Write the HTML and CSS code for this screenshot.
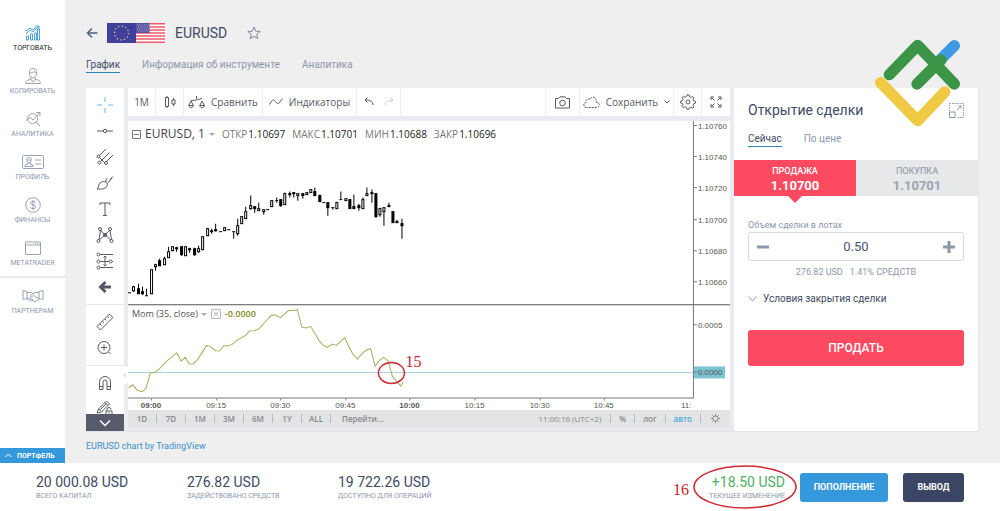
FILE: index.html
```html
<!DOCTYPE html>
<html lang="ru">
<head>
  <meta charset="UTF-8">
  <title>EURUSD — торговля</title>
  <link rel="stylesheet" href="styles.css">
</head>
<body>
  <nav class="sidebar">
    <a href="#" class="nav-item active">
      <svg width="16" height="16" viewBox="0 0 16 16"><path d="M1.500 15v-4h2v4zM5.500 15V9h2v6zM9.500 15V8h2v7zM12.500 15V4h2v11zM1 9l4-4 3 2 6-6M10.500 1H14v3M1 6l4-3 3 2 3-3"/></svg>
      <span>ТОРГОВАТЬ</span>
    </a>
    <a href="#" class="nav-item">
      <svg width="16" height="16" viewBox="0 0 16 16"><path d="M4.500 5.500C4 2 5.500.5 8 .5s4 1.500 3.500 5c0 3-1.700 4.500-3.500 4.500S4.500 8.500 4.500 5.500zM4.500 5c2 0 4-.5 5-1.500.5 1 1.200 1.500 2 1.500M6 9.500v2L8 14l2-2.500v-2M6 11l-4 1.500c-1 .5-1.300 1.500-1.300 3h14.600c0-1.500-.3-2.500-1.300-3L10 11"/></svg>
      <span>КОПИРОВАТЬ</span>
    </a>
    <a href="#" class="nav-item">
      <svg width="16" height="16" viewBox="0 0 16 16"><circle cx="7.500" cy="7.500" r="5"/><path d="M11 11l4 4M.5 10l4.500-3.500 3 2.500 6.500-7M11 1.500h4V5"/></svg>
      <span>АНАЛИТИКА</span>
    </a>
    <a href="#" class="nav-item">
      <svg width="22" height="16" viewBox="0 0 22 16"><rect x=".5" y="1.500" width="21" height="13" rx="1"/><path d="M13 6h6M13 10h6M4.800 5.500C4.800 4 5.700 3.500 7 3.500s2.200.5 2.200 2S8.500 8.500 7 8.500s-2.200-1.500-2.200-3zM5 6h4M6 8.500V10l-3 1v1.500h8V11l-3-1V8.500"/></svg>
      <span>ПРОФИЛЬ</span>
    </a>
    <a href="#" class="nav-item">
      <svg width="16" height="16" viewBox="0 0 16 16"><circle cx="8" cy="8" r="7.300"/><path d="M10.500 5.500C10 4.700 9.200 4.400 8 4.400c-1.500 0-2.500.6-2.500 1.700C5.500 8.500 10.600 7 10.600 9.800c0 1.200-1.100 1.800-2.600 1.800-1.200 0-2.200-.4-2.700-1.300M8 3v10"/></svg>
      <span>ФИНАНСЫ</span>
    </a>
    <a href="#" class="nav-item">
      <svg width="16" height="16" viewBox="0 0 16 16"><path d="M.5 2h15v12.500H.5zM.5 5h15M10 3.500h1M12.500 3.500h1"/></svg>
      <span>METATRADER</span>
    </a>
    <hr>
    <a href="#" class="nav-item">
      <svg width="22" height="16" viewBox="0 0 22 16"><path d="M1 2.500l4 1v7l-4 1zM21 2.500l-4 1v7l4 1zM5 4.500h4l2 1 2-1h4M11 5.500L8 8c1 1 2 1 3.500-.5L17 11M5 10l1.500.5M6 11.500l2-2 1 1-2 2zM8.500 12.500l1.500-1.500 1 1-1.500 1.500zM11 13l1.500.8L14 13l1.500-.5L17 11"/></svg>
      <span>ПАРТНЕРАМ</span>
    </a>
    <button class="portfolio">
      <svg width="7" height="5" viewBox="0 0 7 5"><path d="M.5 4l3-3 3 3"/></svg>
      ПОРТФЕЛЬ
    </button>
  </nav>

  <main>
    <header class="instrument">
      <button class="icon-btn back" aria-label="Назад">
        <svg width="12" height="12" viewBox="0 0 12 12"><path d="M11.500 6H1.500M6 1.500L1.500 6 6 10.500"/></svg>
      </button>
      <svg class="flags" width="58" height="20" viewBox="0 0 58 20">
        <path fill="#403f9b" stroke="none" d="M0 0h29v20H0z"/>
        <circle cx="14.500" cy="10" r="7" fill="none" stroke="#d9cf7c" stroke-width="1.400" stroke-dasharray="1.200 2.465"/>
        <path fill="#fff" stroke="none" d="M29 0h29v20H29z"/>
        <path stroke="#ee5a68" stroke-width="1.500" d="M29 .8h29M29 3.900h29M29 7h29M29 10h29M29 13.100h29M29 16.100h29M29 19.200h29"/>
        <path fill="#55529f" stroke="none" d="M29 0h13.500v10H29z"/>
        <path stroke="#b9b6dd" stroke-dasharray="1 1.300" d="M30 2h12M31 4h11M30 6h12M31 8h11"/>
      </svg>
      <h1>EURUSD</h1>
      <button class="icon-btn star" aria-label="В избранное">
        <svg width="14" height="14" viewBox="0 0 14 14"><path d="M7 1l1.700 4.200 4.500.3-3.500 2.900 1.200 4.400L7 10.300l-3.900 2.500 1.200-4.400L.8 5.500l4.500-.3z"/></svg>
      </button>
    </header>

    <div class="tabs">
      <a href="#" class="active">График</a>
      <a href="#">Информация об инструменте</a>
      <a href="#">Аналитика</a>
    </div>

    <div class="workspace">
      <section class="chart-widget">
        <div class="draw-tools">
          <button aria-label="Перекрестие"><svg class="cross" width="18" height="18" viewBox="0 0 18 18"><path d="M9 1v5M9 12v5M1 9h5M12 9h5"/></svg></button>
          <button aria-label="Линия"><svg width="18" height="18" viewBox="0 0 18 18"><path d="M1 9h6M11 9h6"/><circle cx="9" cy="9" r="1.700"/></svg></button>
          <button aria-label="Вилы"><svg width="18" height="18" viewBox="0 0 18 18"><path d="M3 8l7-7M4.500 13.500l9-9M10 14l7-7M3 9l6 6"/><circle cx="2.500" cy="8.500" r="1.500"/><circle cx="3.500" cy="14.500" r="1.500"/><circle cx="10" cy="15" r="1.500"/></svg></button>
          <button aria-label="Кисть"><svg width="18" height="18" viewBox="0 0 18 18"><path d="M1 15c2-1 1-4 3-6 2-2 5-2 7 0 1 2 0 4-2 5-2 1.500-5 1-8 1zM10 8V5.500L11.500 4M12 9l4-5M14 5.500l3-3"/></svg></button>
          <button aria-label="Текст"><svg width="18" height="18" viewBox="0 0 18 18"><path d="M4 5V3h10v2M9 3v12M7 15.500h4"/></svg></button>
          <button aria-label="Фигуры"><svg width="18" height="18" viewBox="0 0 18 18"><path d="M3 14L4.500 4 9 9l5-5 1.500 10M3 14l6-5 6 5"/><circle cx="4" cy="3" r="1.500"/><circle cx="14" cy="3" r="1.500"/><circle cx="2.500" cy="15" r="1.500"/><circle cx="15.500" cy="15" r="1.500"/><circle cx="9" cy="9" r="1.500"/></svg></button>
          <button aria-label="Прогноз"><svg width="18" height="18" viewBox="0 0 18 18"><path d="M4 2.500h13M4 9.500h9M16 9.500h1M4 15.500h13M9 4v10M7.500 5.500L9 4l1.500 1.500M7.500 12.500L9 14l1.500-1.500"/><circle cx="2.500" cy="2.500" r="1.500"/><circle cx="2.500" cy="9.500" r="1.500"/><circle cx="14.500" cy="9.500" r="1.500"/><circle cx="2.500" cy="15.500" r="1.500"/></svg></button>
          <button aria-label="Скрыть"><svg class="bold" width="18" height="18" viewBox="0 0 18 18"><path d="M15 9H5M9.500 4L4.500 9l5 5"/></svg></button>
          <hr>
          <button aria-label="Линейка"><svg width="18" height="18" viewBox="0 0 18 18"><path d="M1 13.500L13.500 1 17 4.500 4.500 17zM4 11l1.500 1.500M6.500 8.500L8 10M9 6l1.500 1.500M11.500 3.500L13 5"/></svg></button>
          <button aria-label="Увеличить"><svg width="18" height="18" viewBox="0 0 18 18"><circle cx="8" cy="8.500" r="6"/><path d="M12.500 13l2 2M8 5.500v6M5 8.500h6"/></svg></button>
          <hr>
          <button aria-label="Магнит"><svg width="18" height="18" viewBox="0 0 18 18"><path d="M3.500 15.500V8a5.500 5.500 0 0 1 11 0v7.500h-3.500V8a2 2 0 0 0-4 0v7.500zM3.500 12.500H7M11 12.500h3.500"/></svg></button>
          <button aria-label="Блокировка"><svg width="18" height="18" viewBox="0 0 18 18"><path d="M1 13l1.500-4L10.500 1l3 3-8 8zM9 2.500l3 3M3 9l2.500 3M4.500 9.500l6-6M10 11h6v5h-6zM11 11V9.500a2 2 0 0 1 4 0M13 12.500v2"/></svg></button>
          <button class="more" aria-label="Ещё"><svg width="12" height="8" viewBox="0 0 12 8"><path d="M1 1.500l5 5 5-5"/></svg></button>
          <button class="handle" aria-label="Свернуть">‹</button>
        </div>

        <div class="chart-area">
          <div class="toolbar">
            <button class="w-s">1М</button>
            <button class="w-s" aria-label="Свечи"><svg width="12" height="14" viewBox="0 0 12 14"><path d="M1.500 2.500h3v9h-3zM3 1v1.500M3 11.500V13M8 5h3v4H8zM9.500 3v2M9.500 9v2"/></svg></button>
            <button class="w-l"><svg width="17" height="14" viewBox="0 0 17 14"><path d="M3 5.500c4 0 9-1 11-2.500M8.500 1v3M3 6L.8 10.500h4.600L3 6M.8 10.500c.4 3 4.200 3 4.600 0M14 6l-2.200 4.500h4.600L14 6M11.800 10.500c.4 3 4.200 3 4.600 0"/></svg>Сравнить</button>
            <button class="w-xl"><svg width="14" height="8" viewBox="0 0 14 8"><path d="M.5 6.500C3 2 4 1 5.500 2.500S8 6.500 10 5s2-3 3.500-4.500"/></svg>Индикаторы</button>
            <div class="history">
              <button aria-label="Отменить"><svg width="10" height="9" viewBox="0 0 10 9"><path d="M9 8c0-3-2-5-8-5M3.500.5L1 3l2.500 2.500"/></svg></button>
              <button class="off" aria-label="Повторить" disabled><svg width="10" height="9" viewBox="0 0 10 9"><path d="M1 8c0-3 2-5 8-5M6.500.5L9 3 6.500 5.500"/></svg></button>
            </div>
            <div class="spacer"></div>
            <button class="w-m" aria-label="Снимок"><svg width="15" height="13" viewBox="0 0 15 13"><path d="M.5 2.500h3L5 .8h5l1.500 1.700h3v9.500H.5z"/><circle cx="7.500" cy="7" r="2.800"/></svg></button>
            <button class="w-xl"><svg width="17" height="12" viewBox="0 0 17 12"><path stroke-dasharray="2 1" d="M3.500 11.500C0 11 0 7 3 6.500 2.500 3 6 2 7 3.500 9-.5 14 1 13 6c4 0 4.500 5 .5 5.500z"/></svg>Сохранить<svg width="6" height="4" viewBox="0 0 6 4"><path d="M.5.5L3 3 5.500.5"/></svg></button>
            <button class="w-s" aria-label="Настройки"><svg width="16" height="16" viewBox="0 0 16 16"><circle cx="8" cy="8" r="2"/><path d="M7 .8h2l.4 2 1.500.7 1.800-1.100 1.300 1.400-1 1.700.7 1.500 1.700.3v1.900l-1.800.5-.6 1.500 1 1.700-1.300 1.300-1.800-1-1.500.6L9 15.200H7l-.5-1.800-1.400-.7-1.700 1.100-1.300-1.400 1-1.700-.6-1.500L.6 9V7.100l1.900-.4.6-1.400-1-1.700 1.300-1.400 1.700 1.100 1.500-.7z"/></svg></button>
            <button class="w-s" aria-label="На весь экран"><svg width="12" height="12" viewBox="0 0 12 12"><path d="M1 4V1h3M1 1l3.500 3.500M8 1h3v3M11 1L7.500 4.500M1 8v3h3M1 11l3.500-3.500M11 8v3H8M11 11L7.500 7.500"/></svg></button>
          </div>

          <div class="plot">
            <div class="legend">
              <svg width="9" height="9" viewBox="0 0 9 9"><path d="M.5.5h8v8h-8zM2 4.500h5"/></svg>
              <b>EURUSD, 1</b>
              <i class="caret"></i>
              <span>ОТКР<em>1.10697</em></span>
              <span>МАКС<em>1.10701</em></span>
              <span>МИН<em>1.10688</em></span>
              <span>ЗАКР<em>1.10696</em></span>
            </div>
            <div class="legend study">
              <span>Mom (35, close)</span>
              <i class="caret"></i>
              <svg width="10" height="10" viewBox="0 0 10 10"><path d="M.5.5h9v9h-9zM2.500 2.500l5 5M7.500 2.500l-5 5"/></svg>
              <strong>-0.0000</strong>
            </div>
            <svg id="chart" viewBox="0 0 601 289">
              <path class="sep" d="M0 183.500h601"/>
              <path class="zero" d="M0 251h564"/>
              <g id="candles"></g>
              <polyline id="momentum"/>
              <path class="axis" d="M564.500 0v276.500M0 276.500h565"/>
              <rect class="tag" x="565" y="245" width="31" height="12"/>
              <g id="prices"></g>
              <g id="times"></g>
              <ellipse class="mark" cx="263" cy="251.500" rx="13" ry="10.500"/>
              <text class="mark-text" x="277" y="246">15</text>
            </svg>
          </div>

          <div class="ranges">
            <button>1D</button><button>7D</button><button>1M</button><button>3M</button><button>6M</button><button>1Y</button><button>ALL</button>
            <button class="goto">Перейти...</button>
            <span class="clock">11:00:16 (UTC+2)</span>
            <button class="mode">%</button><button class="mode">лог</button><button class="mode on">авто</button>
            <button class="mode" aria-label="Параметры"><svg width="9" height="9" viewBox="0 0 9 9"><circle cx="4.500" cy="4.500" r="2.600"/><path d="M4.500 0v2M4.500 7v2M0 4.500h2M7 4.500h2M1.300 1.300l1.200 1.200M6.500 6.500l1.200 1.200M1.300 7.700l1.200-1.200M6.500 2.500l1.200-1.200"/></svg></button>
          </div>
        </div>
      </section>

      <section class="deal">
        <div class="deal-head">
          <h2>Открытие сделки</h2>
          <button class="icon-btn" aria-label="Открепить">
            <svg width="15" height="15" viewBox="0 0 15 15"><path stroke-dasharray="1.500 1" d="M.5 8V.5h14v14H8"/><path d="M.5 9h5.500v5.500H.5zM8 7l4-4M9.500 3H12v2.500"/></svg>
          </button>
        </div>
        <div class="tabs small">
          <a href="#" class="active">Сейчас</a>
          <a href="#">По цене</a>
        </div>
        <div class="sides">
          <button class="side sell">ПРОДАЖА<b>1.10700</b></button>
          <button class="side">ПОКУПКА<b>1.10701</b></button>
        </div>
        <form class="order">
          <label for="lots">Объем сделки в лотах</label>
          <div class="stepper">
            <button type="button" aria-label="Меньше"><svg width="12" height="12" viewBox="0 0 12 12"><path d="M0 6h12"/></svg></button>
            <input id="lots" type="text" value="0.50">
            <button type="button" aria-label="Больше"><svg width="12" height="12" viewBox="0 0 12 12"><path d="M0 6h12M6 0v12"/></svg></button>
          </div>
          <p class="cost"><span>276.82 USD</span><span>1.41% СРЕДСТВ</span></p>
          <button type="button" class="terms"><svg width="9" height="6" viewBox="0 0 9 6"><path d="M.5.5l4 4.500 4-4.500"/></svg>Условия закрытия сделки</button>
          <button type="button" class="submit">ПРОДАТЬ</button>
        </form>
      </section>
    </div>
    <a href="#" class="credit">EURUSD chart by TradingView</a>
  </main>

  <footer>
    <div class="stat"><b>20 000.08 USD</b><span>ВСЕГО КАПИТАЛ</span></div>
    <div class="stat"><b>276.82 USD</b><span>ЗАДЕЙСТВОВАНО СРЕДСТВ</span></div>
    <div class="stat"><b>19 722.26 USD</b><span>ДОСТУПНО ДЛЯ ОПЕРАЦИЙ</span></div>
    <div class="stat change">
      <b>+18.50 USD</b><span>ТЕКУЩЕЕ ИЗМЕНЕНИЕ</span>
      <svg class="ring" width="126" height="44" viewBox="0 0 126 44">
        <ellipse class="mark" cx="74" cy="22" rx="51" ry="21"/>
        <text class="mark-text" x="2" y="30">16</text>
      </svg>
    </div>
    <button class="deposit">ПОПОЛНЕНИЕ</button>
    <button class="withdraw">ВЫВОД</button>
  </footer>

  <svg class="brand" width="120" height="100" viewBox="0 0 360 300">
    <path stroke="#3f9be0" d="M225 105l58-58"/>
    <path stroke="#3c9446" d="M88 134l85-88 110 116M171 162l72-72"/>
    <path stroke="#f0ca45" d="M62 158l111 114 81-86"/>
  </svg>

  <script src="chart.js"></script>
</body>
</html>
```
FILE: styles.css
```css
* { box-sizing: border-box; margin: 0; padding: 0; }
body {
  display: grid;
  grid-template-columns: 65px 1fr;
  grid-template-rows: 1fr 48px;
  min-height: 100vh;
  position: relative;
  background: #efefef;
  color: #3f4b66;
  font-family: Roboto, sans-serif;
  font-size: 10px;
}
button { font: inherit; color: inherit; background: none; border: none; cursor: pointer; }
a { color: inherit; text-decoration: none; }
svg { flex: none; fill: none; stroke: currentColor; }

/* sidebar */
.sidebar {
  display: flex;
  flex-direction: column;
  padding-top: 25px;
  background: #fff;
  color: #8d97aa;
}
.nav-item {
  display: flex;
  flex-direction: column;
  align-items: center;
  gap: 2px;
  height: 43px;
  font-size: 7px;
  line-height: 10px;
}
.nav-item svg { stroke-width: 0.9; }
.nav-item.active { color: #222; }
.nav-item.active svg { color: #3598db; }
.sidebar hr { height: 2px; margin: -7px 0 10px; border: none; background: #ececec; }
.portfolio {
  display: flex;
  align-items: center;
  gap: 5px;
  height: 15px;
  margin-top: auto;
  padding-left: 5px;
  background: #3598db;
  color: #fff;
  font-size: 7px;
  font-weight: 700;
}

/* header */
main { min-width: 0; padding: 22px 21px 0; }
.instrument { display: flex; align-items: center; height: 21px; }
.icon-btn { display: flex; }
.back { margin-right: 9px; color: #4e6180; }
.back svg { stroke-width: 1.6; }
h1 { margin-left: 10px; font-size: 14px; font-weight: 400; }
.star { margin-left: 20px; color: #7d879c; }
.tabs { display: flex; gap: 22px; margin-top: 14px; color: #8d97aa; line-height: 15px; }
.tabs .active { color: #3f4b66; border-bottom: 1px solid #2c86bd; }

.workspace { display: flex; margin-top: 15px; border: 1px solid #dfe3ea; border-width: 0 1px 1px 0; }

/* chart widget */
.chart-widget {
  display: flex;
  flex: 1;
  min-width: 0;
  gap: 4px;
  padding-right: 4px;
  background: #e9ebf0;
  color: #555a64;
}
.draw-tools {
  position: relative;
  width: 38px;
  padding-top: 4px;
  background: #fff;
}
.draw-tools button { display: flex; align-items: center; justify-content: center; width: 100%; height: 26px; }
.draw-tools hr { margin: 4px 0; border: none; border-top: 1px solid #e4e7ed; }
.draw-tools .cross { color: #6cb6e2; }
.draw-tools .bold { stroke-width: 3; }
.draw-tools .more { position: absolute; bottom: 0; height: 17px; background: #575b6b; color: #fff; }
.more svg { stroke-width: 1.5; }
.draw-tools .handle {
  position: absolute;
  right: -4px;
  top: 278px;
  width: 7px;
  height: 18px;
  border-radius: 3px;
  background: #fff;
  color: #999;
  font-size: 8px;
}
.chart-area { flex: 1; min-width: 0; padding-bottom: 4px; }
.toolbar {
  display: flex;
  height: 28px;
  margin-bottom: 5px;
  background: #fff;
  font-family: "Open Sans", sans-serif;
  font-size: 10px;
}
.toolbar > * { display: flex; align-items: center; justify-content: center; gap: 6px; border-right: 1px solid #eceef2; }
.toolbar > :last-child { border-right: none; }
.w-s { width: 28px; }
.w-m { width: 34px; }
.w-l { width: 79px; }
.w-xl { width: 94px; }
.history { width: 44px; }
.toolbar .history { gap: 10px; }
.off { opacity: 0.3; }
.spacer { flex: 1; }

.plot { position: relative; background: #fff; }
.legend {
  position: absolute;
  top: 5px;
  left: 4px;
  display: flex;
  align-items: center;
  gap: 4px;
  font-family: "Open Sans", sans-serif;
  font-size: 10px;
  line-height: 16px;
  color: #777;
}
.legend b { font-size: 12px; font-weight: 400; color: #444; }
.legend em { margin-left: 1px; font-style: normal; color: #222; }
.legend .caret + span { margin-left: 3px; }
.legend span + span { margin-left: 3px; }
.caret { border: 3px solid transparent; border-top-color: #aaa; border-bottom: none; }
.legend.study { top: 64%; font-size: 9px; color: #555; }
.study .caret { margin-left: -1px; }
.study svg { color: #bbb; }
.study strong { color: #808a14; font-weight: 600; }
#chart { display: block; width: 100%; font: 8px "Liberation Sans", sans-serif; }
#chart text { fill: #555; stroke: none; }
#chart .bold { font-weight: 700; }
.sep { stroke: #555; }
.zero { stroke: #a9d3e0; }
.axis, .tick { stroke: #777; }
#chart .tag { fill: #7cc3d1; stroke: none; }
#candles { fill: #fff; stroke: #000; }
#candles .down { fill: #000; }
#momentum { stroke: #a8ad62; }
.mark { stroke: #cf2a35; stroke-width: 1.5; }
.mark-text, #chart .mark-text { font: 16px "Liberation Serif", serif; fill: #c8242f; stroke: none; }

.ranges {
  display: flex;
  align-items: center;
  height: 17px;
  background: #e3e4e6;
  color: #888;
  font-family: "Open Sans", sans-serif;
  font-size: 8px;
  font-weight: 600;
}
.ranges button { height: 9px; width: 29px; line-height: 9px; border-right: 1px solid #bbb; }
.ranges .goto { width: auto; padding-left: 11px; border: none; }
.ranges .clock { margin-left: auto; padding-right: 9px; font-weight: 400; }
.ranges .mode { width: auto; padding: 0 8px; border-right: none; border-left: 1px solid #bbb; }
.ranges .mode:last-child { padding: 0 10px; }
.ranges .on { color: #4aa9dc; }

/* deal form */
.deal { flex: 0 0 244px; min-width: 0; background: #fff; }
.deal-head { display: flex; align-items: center; justify-content: space-between; padding: 12px 14px 0; }
h2 { font-size: 14px; font-weight: 400; line-height: 20px; }
.deal-head .icon-btn { color: #8d97aa; }
.tabs.small { margin: 11px 14px 13px; }
.sides { display: flex; background: #e6e8ea; }
.side {
  display: flex;
  flex: 1;
  flex-direction: column;
  align-items: center;
  position: relative;
  padding: 4px 0 3px;
  color: #9ba3b1;
  font-size: 9px;
  font-weight: 500;
  line-height: 14px;
}
.side b { font-size: 13px; line-height: 15px; }
.sell { background: #fe4a60; color: #fff; }
.sell::after {
  content: "";
  position: absolute;
  top: 100%;
  border: 7px solid transparent;
  border-top-color: #fe4a60;
  border-bottom: none;
}
.order { padding: 22px 14px 0; color: #8d97aa; font-size: 9px; }
.order label { display: block; line-height: 14px; }
.stepper { display: flex; height: 29px; border: 1px solid #d9dde3; border-radius: 2px; }
.stepper button { display: flex; align-items: center; padding: 0 8px; }
.stepper svg { stroke-width: 3; }
.stepper input {
  flex: 1;
  min-width: 0;
  border: none;
  text-align: center;
  color: #4a556e;
  font: 13px Roboto, sans-serif;
}
.cost { display: flex; justify-content: center; gap: 7px; margin-top: 4px; line-height: 14px; }
.terms { display: flex; align-items: center; gap: 6px; margin: 12px 0 23px; color: #3f4b66; font-size: 10px; line-height: 16px; }
.terms svg { color: #8d97aa; }
.submit { width: 100%; height: 36px; border-radius: 3px; background: #fe4a60; color: #fff; font-size: 12px; font-weight: 500; }
.credit { display: inline-block; margin-top: 7px; color: #3d8ec9; font-size: 9px; line-height: 14px; }

/* footer */
footer {
  grid-column: 1 / -1;
  display: flex;
  align-items: center;
  padding: 0 36px;
  background: #fff;
}
.stat { width: 151px; color: #8d97aa; font-size: 7px; line-height: 10px; }
.stat b { display: block; color: #3f4b66; font-size: 14px; font-weight: 400; line-height: 18px; }
.stat.change { position: relative; width: auto; margin-left: auto; text-align: right; }
.stat.change b { color: #4fae66; }
.ring { position: absolute; right: -12px; top: -8px; }
footer button { height: 29px; border-radius: 3px; color: #fff; font-size: 9px; font-weight: 700; }
.deposit { width: 88px; margin: 0 15px; background: #3598db; }
.withdraw { width: 61px; background: #3a4664; }

.brand { position: absolute; right: 20px; top: 30px; stroke-width: 34; stroke-linecap: round; stroke-linejoin: round; pointer-events: none; }
```
FILE: chart.js
```js
const NS = "http://www.w3.org/2000/svg";

// Свечи: [верх тела, низ тела, максимум, минимум, падение], в третях единицы
const candles = [
  [366,366,366,366], [349,360,345,363], [354,368,340,370,1], [364,368,348,372,1], [374,374,355,374],
  [298,368,298,368], [281,289,278,300], [269,284,265,284,1], [265,283,257,283], [244,260,228,262],
  [229,241,229,241], [230,234,228,243,1], [229,252,229,255,1], [229,256,229,256], [235,238,230,246,1],
  [233,252,230,255,1], [233,244,225,246], [199,236,199,236], [175,196,170,196], [181,182,175,188,1],
  [177,181,160,182,1], [183,183,183,183], [172,181,172,181], [176,176,176,176], [184,184,184,203],
  [166,190,144,196], [137,160,137,160], [122,143,108,143], [106,115,75,118], [108,114,108,125,1],
  [115,121,96,121], [116,122,116,132], [116,116,116,116], [91,109,91,109], [91,91,80,97],
  [88,105,88,107,1], [68,102,66,102], [68,73,62,80], [66,69,66,80,1], [68,74,68,90],
  [69,76,69,85,1], [66,73,66,73], [58,66,58,66], [64,74,51,75,1], [76,92,72,94,1],
  [97,97,97,97], [97,110,97,135,1], [110,110,110,118], [96,115,92,115], [87,87,63,88],
  [83,91,83,91], [88,115,88,115,1], [109,115,73,115,1], [106,110,99,119,1], [88,115,82,115],
  [68,76,51,76], [65,68,57,95,1], [69,137,69,141,1], [114,133,110,138], [110,124,110,165],
  [105,109,97,109,1], [124,156,124,156,1], [152,157,146,157,1], [160,165,143,203,1]
];

// Momentum: x, y
const momentum = [
  26,292, 38,283, 52,300, 66,304, 78,294, 91,247, 104,246, 117,236, 142,211, 170,187, 183,212, 195,201,
  208,220, 219,221, 233,207, 246,186, 259,166, 270,168, 286,181, 298,182, 311,166, 324,166, 336,162,
  350,150, 375,136, 388,122, 402,121, 417,115, 440,89, 453,75, 465,74, 481,82, 505,61, 520,61, 531,58,
  545,111, 558,113, 571,108, 598,153, 609,165, 621,171, 635,161, 648,165, 673,142, 686,170, 698,192,
  711,206, 725,190, 738,179, 751,175, 764,227, 778,209, 790,201, 803,211, 816,258, 829,274, 841,287, 848,275
];

const prices = [
  [5, "1.10760"], [36, "1.10740"], [67, "1.10720"], [99, "1.10700"], [130, "1.10680"], [161, "1.10660"],
  [204, "0.0005"], [251, "0.0000"]
];
const times = ["09:00", "09:15", "09:30", "09:45", "10:00", "10:15", "10:30", "10:45"];

function add(parent, tag, attrs, text) {
  const el = document.createElementNS(NS, tag);
  for (const key in attrs) el.setAttribute(key, attrs[key]);
  if (text) el.textContent = text;
  document.getElementById(parent).appendChild(el);
}

candles.forEach(([top, bottom, high, low, down], i) => {
  const x = Math.round((27 + i * 12.940) / 3 - 8) + 0.5;
  const y = v => Math.round(v / 3 + 49) + 0.5;
  add("candles", "path", { d: `M${x} ${y(high)}V${y(low)}` });
  if (top === bottom) {
    add("candles", "path", { d: `M${x - 1.5} ${y(top)}h3` });
  } else {
    add("candles", "rect", { x: x - 1, y: y(top), width: 2, height: y(bottom) - y(top), class: down ? "down" : "up" });
  }
});

const points = [];
for (let i = 0; i < momentum.length; i += 2) {
  points.push(`${(momentum[i] / 3 - 8).toFixed(1)},${(momentum[i + 1] / 3 + 169).toFixed(1)}`);
}
document.getElementById("momentum").setAttribute("points", points.join(" "));

prices.forEach(([y, label]) => {
  add("prices", "path", { d: `M565 ${y - 0.5}h3`, class: "tick" });
  add("prices", "text", { x: 569, y: y + 3 }, label);
});

times.forEach((label, i) => {
  const x = Math.round(23 + i * 64.600);
  add("times", "path", { d: `M${x + 0.5} 277v2`, class: "tick" });
  add("times", "text", { x: x, y: 287, "text-anchor": "middle", class: label.endsWith("00") ? "bold" : "" }, label);
});
add("times", "text", { x: 552, y: 287 }, "11:");
```
